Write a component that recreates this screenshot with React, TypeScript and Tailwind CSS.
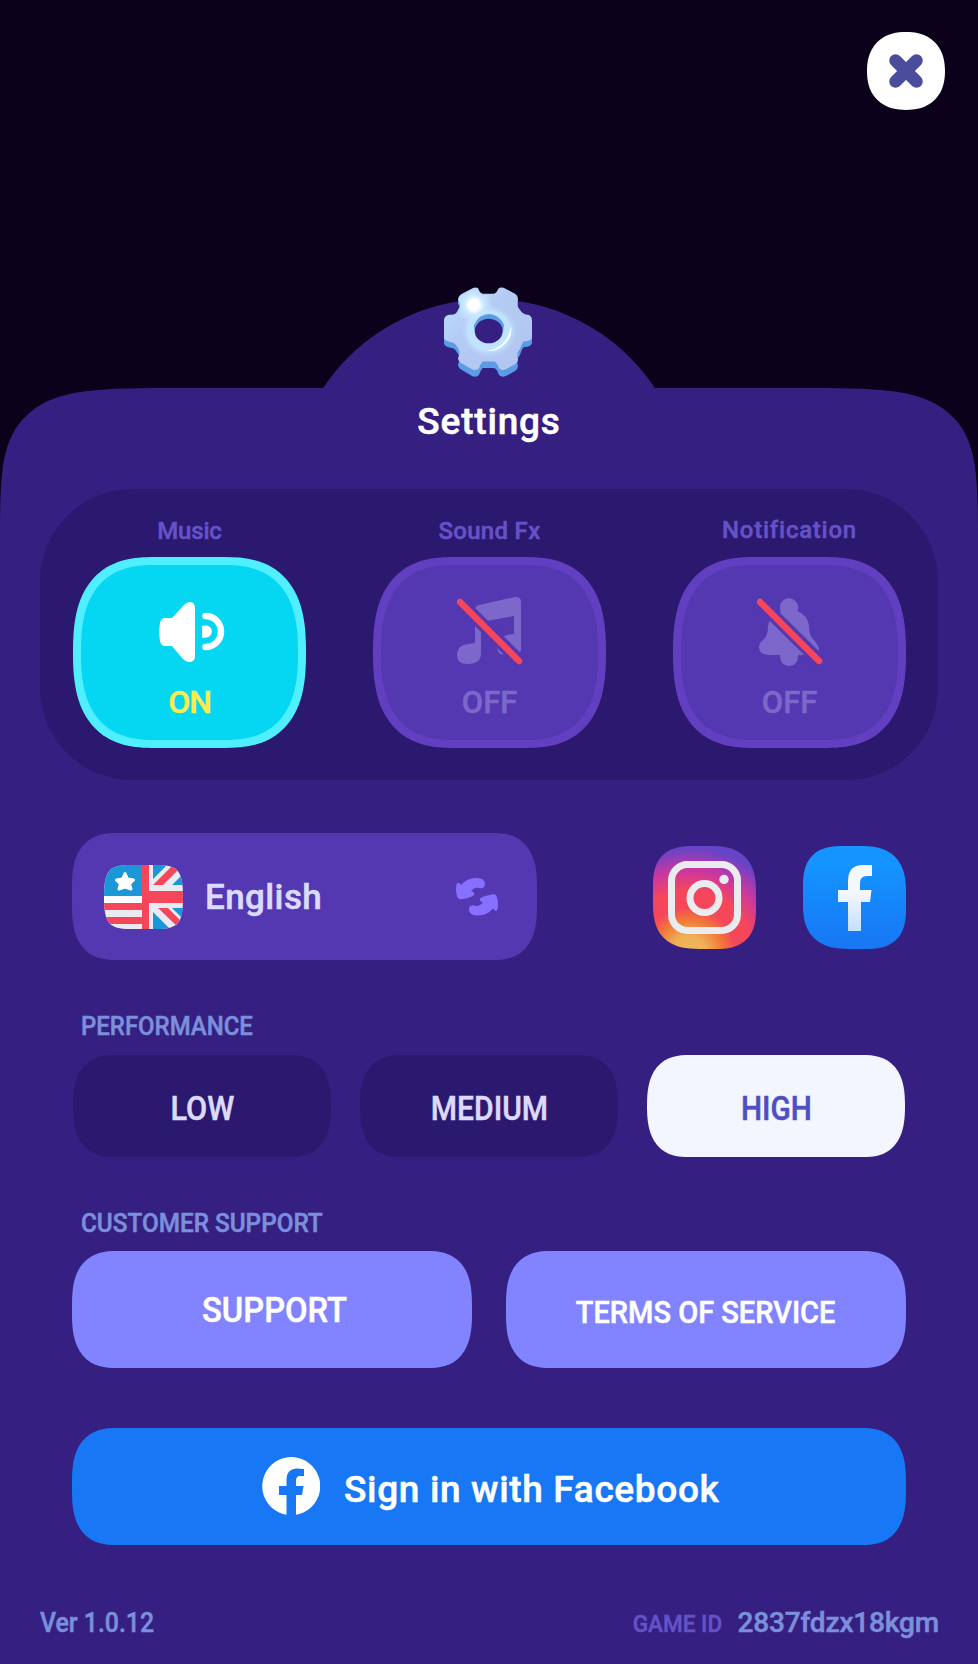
import React from "react";

const tileShape = "rounded-[82px/95px] [corner-shape:superellipse(1.36)]";
const buttonShape = "rounded-[45px/54px] [corner-shape:superellipse(1.36)]";

function Gear() {
  const body =
    "M29 1 Q31 0 34 1 Q36 7 39 7 H50 Q53 6 54 2 Q57 -1 62 2 L71 7 Q74 9 74 13 Q72 20 76 24 Q79 29 84 29 Q88 30 88 35 L88 53 Q87 57 80 57 Q78 58 76 65 Q72 69 74 76 Q74 79 71 81 L62 86 Q58 88 55 85 Q53 79 50 78 H39 Q37 79 35 85 Q32 88 28 86 L18 80 Q14 78 14 74 Q17 70 14 64 Q11 58 8 58 Q0 57 0 53 L0 35 Q0 30 5 29 Q12 30 14 24 Q18 18 14 14 Q14 9 18 7 Z M44 31 A14 13 0 1 0 44 57 A14 13 0 1 0 44 31 Z";
  return (
    <svg width="88" height="90" viewBox="0 0 88 90" aria-hidden="true">
      <defs>
        <linearGradient id="gearBody" x1="0" y1="0" x2="1" y2="1">
          <stop offset="0" stopColor="#bcdffd" />
          <stop offset="0.4" stopColor="#b4cbf3" />
          <stop offset="1" stopColor="#b1c4f0" />
        </linearGradient>
        <radialGradient id="gearShine">
          <stop offset="0" stopColor="#fff" />
          <stop offset="0.28" stopColor="#fff" />
          <stop offset="0.5" stopColor="#cdeaff" />
          <stop offset="1" stopColor="#c2e6ff" stopOpacity="0" />
        </radialGradient>
        <radialGradient id="gearRing">
          <stop offset="0.5" stopColor="#c0e4ff" />
          <stop offset="0.7" stopColor="#c0e4ff" />
          <stop offset="1" stopColor="#b4c8f2" stopOpacity="0" />
        </radialGradient>
        <clipPath id="gearClip">
          <path d={body} clipRule="evenodd" />
        </clipPath>
      </defs>
      <g transform="translate(0 1)">
        <path d={body} transform="translate(0 2)" fill="#5c9ce6" fillRule="evenodd" />
        <ellipse cx="44.5" cy="41" rx="16.5" ry="15.5" fill="#5c9ce6" />
        <path d={body} transform="translate(0 -1) scale(1 .955)" fill="url(#gearBody)" fillRule="evenodd" />
        <ellipse cx="45" cy="43" rx="30" ry="28" fill="url(#gearRing)" />
        <circle cx="30" cy="17" r="19" fill="url(#gearShine)" clipPath="url(#gearClip)" />
        <path d="M30 37 Q35 26 45 26 Q56 27 60 37 L59 45 Q57 31 44 31 Q32 32 30 43Z" fill="#5c9ce6" />
        <ellipse cx="44.7" cy="43" rx="14" ry="12.3" fill="#352082" />
        <path d="M67 38 Q69 48 61 56 Q53 64 43 63 Q54 61 60 54 Q66 48 67 38Z" fill="#fff" />
      </g>
    </svg>
  );
}

function Speaker() {
  return (
    <svg width="66" height="60" viewBox="0 0 66 60" fill="#fff" aria-hidden="true">
      <path d="M13 16 L24 4 Q28 0 31 0 Q36 0 36 6 V54 Q36 60 30 60 Q27 60 23 56 L13 44 H6 Q2 44 1 39 Q-.5 30 1 21 Q2 16 6 16Z" />
      <path d="M46.500 14.500 A15.500 15.500 0 1 1 46.500 45.500" transform="translate(0 -.5)" stroke="#fff" strokeWidth="6.500" strokeLinecap="round" fill="none" />
      <path d="M43 24 Q52 22 53 29.500 Q52 37 43 35.500Z" />
    </svg>
  );
}

const slash = (
  <>
    <path d="M3.500 5.500 L63 64.500" stroke="#5338b2" strokeWidth="13" />
    <path d="M3 5 L62 64" stroke="#f6465e" strokeWidth="6.500" strokeLinecap="round" />
  </>
);

function MusicOff() {
  return (
    <svg width="66" height="72" viewBox="0 0 66 72" aria-hidden="true">
      <path
        fill="#7c68cb"
        d="M18 13 Q18 9 22 8 L58 0 Q64 0 64 5 V53 Q64 55 60 57 Q50 58 43 57 Q38 52 41 45 Q46 37 57 37 V19 L24 25 V57 Q24 67 10 67 Q0 67 0 58 Q0 48 12 47 L18 46Z"
      />
      {slash}
    </svg>
  );
}

function BellOff() {
  return (
    <svg width="66" height="72" viewBox="0 0 66 72" aria-hidden="true">
      <path
        fill="#7c68cb"
        d="M24 15 A9.200 9.200 0 1 1 40.500 14 Q50 18 52 28 Q52 37 55 41 Q62 48 62 53 Q61 58 54 58 H41 Q41 69 32 69 Q23 69 23 58 H11 Q2 57 2 50 Q2 46 7 42 Q11 38 11 29 Q12 19 24 15Z"
      />
      {slash}
    </svg>
  );
}

function Flag() {
  return (
    <svg width="79" height="64" viewBox="0 0 79 64" aria-hidden="true">
      <clipPath id="flagClip">
        <path d="M0 32 C0 6 5 0 26 0 H53 C74 0 79 6 79 32 C79 58 74 64 53 64 H26 C5 64 0 58 0 32Z" />
      </clipPath>
      <g clipPath="url(#flagClip)">
        <path fill="#e9ebf0" d="M0 0H79V64H0z" />
        <path fill="#1b97d7" d="M0 0H38V31H0z" />
        <path fill="#fff" d="M0 31H38V38H0z" />
        <path fill="#f6465a" d="M0 38H38V45H0zM0 52H38V59H0zM38 0H45V64H38zM45 26H79V38H45z" />
        <path fill="#1b97d7" d="M49 0H63L49 14zM68 20 79 9V20zM49 47 66 64H49zM65 43H79V57z" />
        <path fill="#e9ebf0" d="M54 43H68L79 54V64H74z" />
        <path fill="#1b97d7" d="M70 43H79V52z" />
        <path fill="#f6465a" d="M49 20 70 -1 74 5 59 20zM54 43H64L79 58V67z" />
        <path
          fill="#fff"
          stroke="#fff"
          strokeWidth="3"
          strokeLinejoin="round"
          d="M21 8.500 23.500 14 29.500 15 25.500 19 27 24 21 22 15 24 16.500 19 12.500 15 18.500 14Z"
        />
      </g>
    </svg>
  );
}

function Cycle() {
  const arrow =
    "M1 5 Q3 4 5 7 Q11 0 20 0 Q29 0 29 6 Q29 11 23 10 Q19 8 15 13 Q19 14 18 17 Q14 20 6 21 Q2 22 1 18 Q-1 11 1 5Z";
  return (
    <svg width="42" height="38" viewBox="0 0 42 38" fill="#8770ff" aria-hidden="true">
      <path d={arrow} />
      <path d={arrow} transform="rotate(180 21 18.700)" />
    </svg>
  );
}

function Instagram() {
  return (
    <svg width="73" height="73" viewBox="0 0 73 73" fill="none" stroke="#ebecef" strokeWidth="7" aria-hidden="true">
      <rect x="3.500" y="3.500" width="66" height="66" rx="16" />
      <circle cx="36.500" cy="37" r="14.500" />
      <circle cx="56" cy="18.500" r="4.700" fill="#ebecef" stroke="none" />
    </svg>
  );
}

function FacebookF() {
  return (
    <svg width="34" height="66" viewBox="0 0 34 66" aria-hidden="true">
      <defs>
        <linearGradient id="fGlyph" x1="0" y1="0" x2="0" y2="1">
          <stop offset="0.4" stopColor="#f6f8ff" />
          <stop offset="1" stopColor="#c3dfff" />
        </linearGradient>
      </defs>
      <path fill="url(#fGlyph)" d="M10 66V37H0V25H10V16Q10 0 25 0H34V11H29Q22 11 22 18V25H33.500L32 37H23V66Z" />
    </svg>
  );
}

function FacebookRound() {
  return (
    <svg width="58" height="58" viewBox="0 0 58 58" aria-hidden="true">
      <path
        fill="#fff"
        d="M24.500 57.700V38H17V29H24.500V23C24.500 15 29 11.500 35 11.500Q39 11.500 42 12V19H38Q34 19 34 24V29H41.500L40 38H34V57.700A29 29 0 1 0 24.500 57.700Z"
      />
    </svg>
  );
}

interface ToggleProps {
  label: string;
  on?: boolean;
  raised?: boolean;
  labelClass: string;
  children: React.ReactNode;
}

function Toggle({ label, on, raised, labelClass, children }: ToggleProps) {
  return (
    <div className={`flex w-[233px] flex-col items-center ${raised ? "pt-[26px]" : "pt-[27px]"}`}>
      <div className={`h-[30px] text-[24px] leading-[30px] text-[#6552c8] ${labelClass} ${raised ? "mb-3" : "mb-[11px]"}`}>
        {label}
      </div>
      <button
        className={`flex h-[191px] w-[233px] flex-col items-center border-8 ${tileShape} ${
          on ? "border-[#50efff] bg-[#05d7f2] pt-[37px]" : "border-[#623fc1] bg-[#5338b2] pt-[32px]"
        }`}
      >
        <span className={on ? "ml-1 block h-[60px]" : "block h-[65px]"}>{children}</span>
        <span
          className={`mt-[20px] text-[32px] leading-[40px] ${
            on ? "tracking-[-1px] text-[#f8ed4c]" : "scale-x-[.97] text-[#7c68cb]"
          }`}
        >
          {on ? "ON" : "OFF"}
        </span>
      </button>
    </div>
  );
}

export default function App() {
  return (
    <main className="relative flex h-[1664px] w-[978px] flex-col overflow-hidden bg-[#0b011b] font-['Roboto',sans-serif] font-medium [-webkit-text-stroke:0.5px_currentColor] [stroke-linejoin:round]">
      <header className="flex h-[388px] shrink-0 justify-end pt-8 pr-[33px]">
        <button className="flex size-[78px] items-center justify-center rounded-[39px] bg-white [corner-shape:superellipse(1.2)]">
          <svg width="34" height="34" viewBox="0 0 34 34" stroke="#4c4c9d" strokeWidth="12.500" strokeLinecap="round" aria-hidden="true">
            <path d="M6.500 6.500 27.500 27.500M27.500 6.500 6.500 27.500" />
          </svg>
        </button>
      </header>

      <div className="absolute top-[299px] left-[290px] size-[398px] rounded-full bg-[#352082]" />

      <section className="relative flex flex-1 flex-col rounded-tl-[185px_160px] rounded-tr-[185px_160px] bg-[#352082] [corner-shape:superellipse(2.02)]">
        <div className="absolute top-[-101px] left-[444px]">
          <Gear />
        </div>
        <h1 className="mt-[10px] h-[91px] text-center text-[37px] leading-[48px] tracking-[0.8px] text-white">Settings</h1>

        <div className="mx-10 flex h-[291px] shrink-0 justify-between rounded-[92px] bg-[#2b186f] pr-8 pl-[33px]">
          <Toggle label="Music" on labelClass="tracking-[-0.2px]">
            <Speaker />
          </Toggle>
          <Toggle label="Sound Fx" labelClass="tracking-[0.3px]">
            <MusicOff />
          </Toggle>
          <Toggle label="Notification" raised labelClass="tracking-[0.75px]">
            <BellOff />
          </Toggle>
        </div>

        <div className="mx-[72px] mt-[53px] flex h-[127px] shrink-0 items-center">
          <button className={`flex h-[127px] w-[465px] items-center bg-[#5338b2] pr-[39px] pl-8 ${buttonShape}`}>
            <Flag />
            <span className="mt-0.5 ml-[22px] flex-1 text-left text-[35px] leading-[44px] tracking-[0.4px] text-[#dcdbff]">
              English
            </span>
            <Cycle />
          </button>
          <button className="mt-0.5 ml-auto flex size-[103px] items-center justify-center rounded-[40px_46px] bg-[radial-gradient(circle_at_35%_105%,#f5b857_0%,#f0b057_14%,#f27838_27%,#f6465a_37%,#f6465a_50%,#cb37a0_66%,#6544c8_84%)] [corner-shape:superellipse(1.36)]">
            <Instagram />
          </button>
          <button className="mt-0.5 ml-[47px] flex size-[103px] items-center justify-center rounded-[40px_46px] bg-linear-to-b from-[#1593ff] from-20% to-[#1876f3] [corner-shape:superellipse(1.36)]">
            <FacebookF />
          </button>
        </div>

        <h2 className="mt-[52px] ml-[81px] h-[43px] origin-left scale-x-[.958] text-[25px] leading-[30px] text-[#7b8fdb]">
          PERFORMANCE
        </h2>
        <div className="mx-[73px] flex h-[102px] shrink-0 justify-between text-[33px] text-[#dcdbff]">
          <button className={`w-[258px] bg-[#2b186f] pt-[6px] ${buttonShape}`}>
            <span className="inline-block scale-x-[.93]">LOW</span>
          </button>
          <button className={`w-[258px] bg-[#2b186f] pt-[6px] ${buttonShape}`}>
            <span className="inline-block scale-x-[.91]">MEDIUM</span>
          </button>
          <button className={`w-[258px] bg-[#f3f5ff] pt-[6px] text-[#4f4fc4] ${buttonShape}`}>
            <span className="inline-block scale-x-[.9]">HIGH</span>
          </button>
        </div>

        <h2 className="mt-[52px] ml-[81px] h-[42px] origin-left scale-x-[.972] text-[25px] leading-[30px] text-[#7b8fdb]">
          CUSTOMER SUPPORT
        </h2>
        <div className="mx-[72px] flex h-[117px] shrink-0 justify-between text-white">
          <button className={`w-[400px] bg-[#8284ff] pt-[4px] pl-[6px] text-[35px] ${buttonShape}`}>
            <span className="inline-block scale-x-[.935]">SUPPORT</span>
          </button>
          <button className={`w-[400px] bg-[#8284ff] pt-[6px] text-[30.5px] ${buttonShape}`}>
            <span className="inline-block scale-x-[.95]">TERMS OF SERVICE</span>
          </button>
        </div>

        <button className={`mx-[72px] mt-[60px] flex h-[117px] shrink-0 items-center bg-[#1877f5] pb-0.5 pl-[190px] text-white ${buttonShape}`}>
          <FacebookRound />
          <span className="mt-[8px] ml-[24px] text-[37px] leading-[48px] tracking-[0.66px]">Sign in with Facebook</span>
        </button>

        <footer className="mr-[39px] ml-10 mt-[59px] flex items-center justify-between leading-[36px] text-[#7b8fdb]">
          <span className="origin-left scale-x-[.92] text-[27px]">Ver 1.0.12</span>
          <span className="flex items-center gap-[15px]">
            <span className="mt-0.5 origin-right scale-x-[.94] text-[24px] text-[#6552c8]">GAME ID</span>
            <span className="text-[28px] tracking-[-0.15px]">2837fdzx18kgm</span>
          </span>
        </footer>
      </section>
    </main>
  );
}
